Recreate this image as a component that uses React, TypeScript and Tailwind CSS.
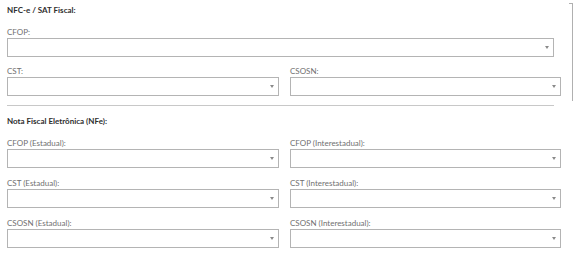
import React from 'react';

function Select({ className = '' }: { className?: string }) {
  return (
    <div className={`relative h-[19px] border border-[#b4b4b4] bg-white ${className}`}>
      <svg className="absolute right-[4px] top-[7px]" width="4" height="3" viewBox="0 0 4 3">
        <path d="M0 0 L4 0 L2 3 Z" fill="#8a8a8a" />
      </svg>
    </div>
  );
}

function Field({ label, className = '' }: { label: string; className?: string }) {
  return (
    <div className={className}>
      <div className="h-[10px] text-[8px] leading-[10px] text-[#707070]">{label}</div>
      <Select className="mt-px" />
    </div>
  );
}

export default function App() {
  return (
    <div className="relative h-[253px] w-[575px] overflow-hidden bg-white font-['Lato','Liberation_Sans',sans-serif]">
      {/* scrollbar thumb edge */}
      <div className="absolute left-[569px] top-[3px] h-px w-[4px] bg-[#b0b0b0]" />
      <div className="absolute left-[572px] top-[3px] h-[98px] w-px bg-[#b0b0b0]" />

      <div className="w-[554px] pl-[7px] pt-[5px]">
        <h2 className="h-[10px] text-[8px] font-bold leading-[10px] text-[#2e2e2e]">NFC-e / SAT Fiscal:</h2>
        <Field label="CFOP:" className="mt-[12px]" />
        <div className="mt-[9px] grid grid-cols-[272px_271px] gap-x-[11px]">
          <Field label="CST:" />
          <Field label="CSOSN:" />
        </div>
        <div className="mt-[9px] h-px bg-[#c8c8c8]" />

        <h2 className="mt-[10px] h-[10px] text-[8px] font-bold leading-[10px] text-[#2e2e2e]">
          Nota Fiscal Eletrônica (NFe):
        </h2>
        <div className="mt-[12px] grid grid-cols-[272px_271px] gap-x-[11px] gap-y-[10px]">
          <Field label="CFOP (Estadual):" />
          <Field label="CFOP (Interestadual):" />
          <Field label="CST (Estadual):" />
          <Field label="CST (Interestadual):" />
          <Field label="CSOSN (Estadual):" />
          <Field label="CSOSN (Interestadual):" />
        </div>
      </div>
    </div>
  );
}
